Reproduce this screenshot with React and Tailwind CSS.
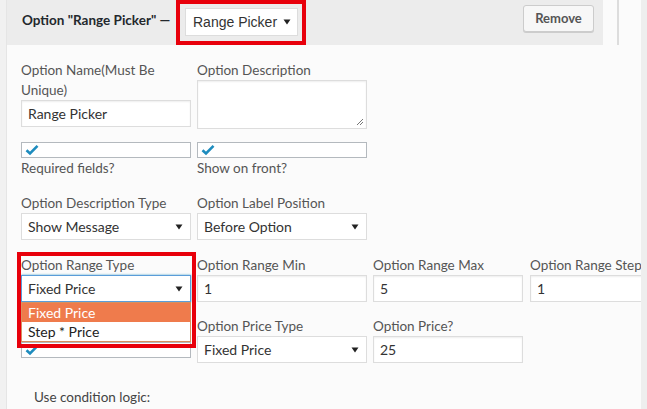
import React from "react";

const Arrow = () => (
  <svg width="8" height="6" viewBox="0 0 8 6" className="shrink-0">
    <path d="M0.5 0.5 L7.5 0.5 L4 5.5 Z" fill="#222" />
  </svg>
);

const Check = () => (
  <svg width="14" height="12" viewBox="0 0 14 12">
    <path d="M1.5 6.2 L5 9.5 L12.5 1.8" stroke="#1e8cbe" strokeWidth="2.6" fill="none" />
  </svg>
);

const Label = ({ children, className = "" }) => (
  <div className={"text-[13.5px] leading-[20px] text-[#555] " + className}>{children}</div>
);

const Input = ({ value, w = "w-[170px]" }) => (
  <div className={`${w} h-[27px] border border-[#ddd] bg-white shadow-[inset_0_1px_2px_rgba(0,0,0,0.07)] flex items-center px-[6px] text-[14px] text-[#333]`}>
    {value}
  </div>
);

const Select = ({ value, focused = false }) => (
  <div
    className={`w-[170px] h-[27px] border ${
      focused ? "border-[#5b9dd9] shadow-[0_0_2px_rgba(30,140,190,0.8)]" : "border-[#ddd]"
    } bg-white flex items-center justify-between pl-[6px] pr-[7px] text-[14px] text-[#333]`}
  >
    <span>{value}</span>
    <Arrow />
  </div>
);

const CheckBox = () => (
  <div className="w-[170px] h-[16px] border border-[#b4b9be] bg-white flex items-center pl-[3px]">
    <Check />
  </div>
);

export default function App() {
  return (
    <div
      className="relative w-[647px] h-[409px] overflow-hidden bg-[#f1f1f1]"
      style={{ fontFamily: "Lato, 'Noto Sans', sans-serif" }}
    >
      <div className="ml-[6px] w-[635px] h-full flex flex-col bg-[#fbfbfb] border-l border-[#e5e5e5]">
        {/* header */}
        <div className="flex h-[45px] shrink-0">
          <div className="w-[596px] bg-[#ececec] flex items-start pl-[15px]">
            <div className="w-[163px] mt-[11px] text-[13.5px] font-bold text-[#23282d] leading-[18px] whitespace-nowrap">
              Option "Range Picker" —
            </div>
            <div
              className="mt-[8px] w-[113px] h-[28px] bg-white border border-[#ddd] flex items-center justify-between pl-[7px] pr-[6px] text-[14px] text-[#333]"
              style={{ fontFamily: "'Liberation Sans', Arial, sans-serif" }}
            >
              <span>Range Picker</span>
              <Arrow />
            </div>
            <div className="ml-auto mr-[9px] mt-[5px] h-[27px] w-[71px] rounded-[3px] border border-[#ccc] bg-[#f7f7f7] shadow-[0_1px_0_#ccc] flex items-center justify-center text-[13px] font-bold text-[#555]">
              Remove
            </div>
          </div>
          <div className="flex-1 bg-[#fbfbfb] relative">
            <div className="absolute left-[14px] top-0 w-[2px] h-[45px] bg-[#ddd]" />
          </div>
        </div>

        {/* content */}
        <div className="pl-[14px] pt-[15px] flex flex-col">
          {/* row 1 */}
          <div className="flex gap-[6px] items-start">
            <div className="w-[170px]">
              <Label>
                Option Name(Must Be
                <br />
                Unique)
              </Label>
              <Input value="Range Picker" />
            </div>
            <div className="w-[170px]">
              <Label>Option Description</Label>
              <div className="relative w-[170px] h-[49px] border border-[#ddd] bg-white shadow-[inset_0_1px_2px_rgba(0,0,0,0.07)]">
                <svg width="8" height="8" viewBox="0 0 8 8" className="absolute right-[2px] bottom-[2px]">
                  <path d="M7 1 L1 7 M7 4 L4 7" stroke="#777" strokeWidth="1" />
                </svg>
              </div>
            </div>
          </div>

          {/* row 2 */}
          <div className="flex gap-[6px] items-start mt-[13px]">
            <div className="w-[170px]">
              <CheckBox />
              <Label>Required fields?</Label>
            </div>
            <div className="w-[170px]">
              <CheckBox />
              <Label>Show on front?</Label>
            </div>
          </div>

          {/* row 3 */}
          <div className="flex gap-[6px] items-start mt-[15px]">
            <div className="w-[170px]">
              <Label>Option Description Type</Label>
              <Select value="Show Message" />
            </div>
            <div className="w-[170px]">
              <Label>Option Label Position</Label>
              <Select value="Before Option" />
            </div>
          </div>

          {/* row 4 */}
          <div className="flex gap-[6px] items-start mt-[15px]">
            <div className="w-[170px]">
              <Label>Option Range Type</Label>
              <Select value="Fixed Price" focused />
            </div>
            <div className="w-[170px]">
              <Label>Option Range Min</Label>
              <Input value="1" />
            </div>
            <div className="w-[150px]">
              <Label>Option Range Max</Label>
              <Input value="5" w="w-[150px]" />
            </div>
            <div className="w-[150px] ml-[1px]">
              <Label className="whitespace-nowrap">Option Range Step</Label>
              <Input value="1" w="w-[150px]" />
            </div>
          </div>

          {/* row 5 */}
          <div className="flex gap-[6px] items-start mt-[14px]">
            <div className="w-[170px] pt-[26px]">
              <CheckBox />
            </div>
            <div className="w-[170px]">
              <Label>Option Price Type</Label>
              <Select value="Fixed Price" />
            </div>
            <div className="w-[150px]">
              <Label>Option Price?</Label>
              <Input value="25" w="w-[150px]" />
            </div>
          </div>

          <div className="mt-[24px] ml-[13px] text-[13.5px] leading-[20px] text-[#444]">Use condition logic:</div>
        </div>
      </div>

      {/* right edge */}
      <div className="absolute right-0 top-0 w-[6px] h-full bg-[#eeeeee]" />

      {/* header annotation */}
      <div className="absolute left-[176px] top-0 w-[130px] h-[45px] border-[4px] border-[#e8000b]" />

      {/* open dropdown */}
      <div className="absolute left-[21px] top-[302px] w-[170px] border border-[#d7905f] bg-white text-[14px] leading-[18px]">
        <div className="bg-[#ef7b4c] text-white px-[6px] h-[19px] flex items-center">Fixed Price</div>
        <div className="text-[#222] px-[6px] h-[19px] flex items-center">Step * Price</div>
      </div>

      {/* range annotation */}
      <div className="absolute left-[17px] top-[252px] w-[179px] h-[96px] border-[4px] border-[#e8000b]" />
    </div>
  );
}
